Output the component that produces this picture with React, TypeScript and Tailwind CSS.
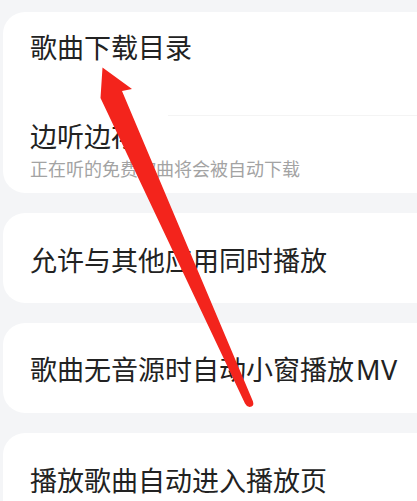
import React from "react";

const font = { fontFamily: '"Noto Sans CJK SC", "Noto Sans", sans-serif' };

function Row({ children }: { children: React.ReactNode }) {
  return (
    <div className="ml-[3px] w-[440px] h-[90px] shrink-0 rounded-[22px] bg-white flex items-center pl-[27px] pt-[3px]">
      <span className="text-[27px] leading-[30px] text-[#222222]">{children}</span>
    </div>
  );
}

export default function App() {
  return (
    <div
      className="relative w-[417px] h-[501px] overflow-hidden bg-[#f4f5f7]"
      style={font}
    >
      <div className="flex flex-col gap-[20px] pt-[12px]">
        <div className="ml-[3px] w-[440px] h-[181px] shrink-0 rounded-[22px] bg-white flex flex-col pl-[27px] pt-[20px]">
          <div className="text-[27px] leading-[30px] text-[#222222]">歌曲下载目录</div>
          <div className="h-[59px] flex flex-col justify-end">
            <div className="ml-[138px] h-px bg-[#f4f4f4]" />
            <div className="h-[5px]" />
          </div>
          <div className="text-[27px] leading-[30px] text-[#222222]">边听边存</div>
          <div className="mt-[6px] text-[18px] leading-[22px] text-[#a3a3a3]">
            正在听的免费歌曲将会被自动下载
          </div>
        </div>
        <Row>允许与其他应用同时播放</Row>
        <Row>
          歌曲无音源时自动小窗播放
          <span className="ml-[2px] font-['Noto_Sans',sans-serif] tracking-[0.5px]">MV</span>
        </Row>
        <Row>播放歌曲自动进入播放页</Row>
      </div>
      <svg
        className="absolute left-0 top-0 pointer-events-none"
        width="417"
        height="501"
        viewBox="0 0 417 501"
      >
        <path
          d="M102.5 67.5 L132 89 L122 91 L253 401.5 Q254.5 406.5 249.5 407 Q246.5 406.5 245 403.5 L100.5 98 Z"
          fill="#f3241c"
        />
      </svg>
    </div>
  );
}
